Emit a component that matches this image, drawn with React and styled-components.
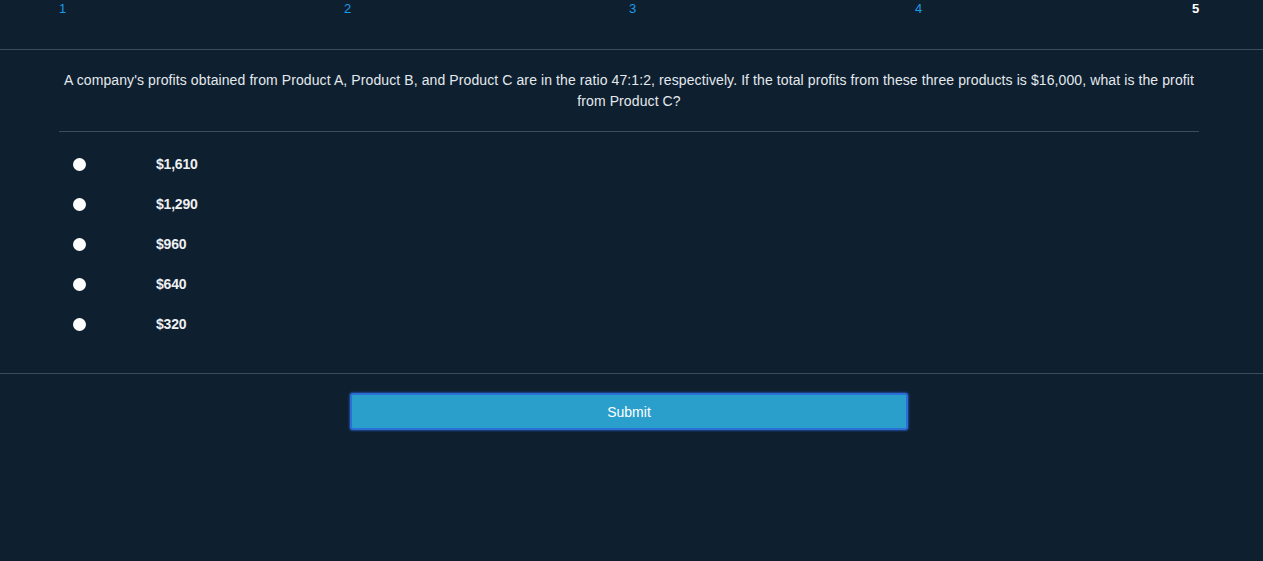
import React, { useState } from "react";
import styled, { createGlobalStyle } from "styled-components";

const Global = createGlobalStyle`
  html, body {
    margin: 0;
    padding: 0;
    background: #0e1f2f;
  }
  body {
    font-family: "Liberation Sans", Arial, Helvetica, sans-serif;
    min-height: 561px;
  }
`

const Page = styled.div`
  background: #0e1f2f;
  min-height: 561px;
  color: #e3e8ec;
`

const Steps = styled.nav`
  display: grid;
  grid-template-columns: 285px 285px 286px 277px auto;
  align-items: start;
  height: 50px;
  padding: 1px 0 0 59px;
  box-sizing: border-box;
  border-bottom: 1px solid #3d4c59;
`

const Step = styled.a`
  font-size: 13px;
  line-height: 16px;
  color: ${(props) => (props.active ? '#ffffff' : '#1a9be8')};
  font-weight: ${(props) => (props.active ? 'bold' : 'normal')};
  text-decoration: none;
  cursor: pointer;
`

const Body = styled.section`
  margin: 0 64px 0 59px;
  padding-top: 20px;
`

const Question = styled.p`
  margin: 0;
  padding: 0 0 19px;
  font-size: 14px;
  line-height: 21px;
  letter-spacing: 0.1px;
  text-align: center;
  color: #e4e9ee;
  border-bottom: 1px solid #3d4c59;
`

const Options = styled.ul`
  list-style: none;
  margin: 0;
  padding: 12px 0 29px;
`

const Option = styled.li`
  display: flex;
  align-items: center;
  height: 40px;
  cursor: pointer;
`

const Radio = styled.span`
  width: 13px;
  height: 13px;
  border-radius: 50%;
  background: #ffffff;
  margin-left: 14px;
  flex-shrink: 0;
  box-sizing: border-box;
  border: ${(props) => (props.checked ? '4px solid #1a9be8' : 'none')};
`

const Label = styled.span`
  margin-left: 70px;
  font-size: 14px;
  font-weight: bold;
  letter-spacing: -0.2px;
  color: #eef1f4;
`

const Footer = styled.div`
  border-top: 1px solid #3d4c59;
  padding-top: 19px;
  display: flex;
  padding-left: 350px;
`

const Submit = styled.button`
  width: 558px;
  height: 37px;
  background: #2b9fcc;
  border: 2px solid #2b6fd6;
  border-radius: 3px;
  box-shadow: 0 0 2px 1px rgba(40, 100, 210, 0.6);
  color: #ffffff;
  font-family: "Liberation Sans", Arial, sans-serif;
  font-size: 14px;
  cursor: pointer;
`

const answers = ['$1,610', '$1,290', '$960', '$640', '$320']

export default function App() {
  const [picked, setPicked] = useState(null)
  return (
    <Page>
      <Global />
      <Steps>
        {[1, 2, 3, 4, 5].map((n) => (
          <Step key={n} active={n === 5}>{n}</Step>
        ))}
      </Steps>
      <Body>
        <Question>
          A company's profits obtained from Product A, Product B, and Product C are in the ratio 47:1:2, respectively. If the total profits from these three products is $16,000, what is the profit from Product C?
        </Question>
        <Options>
          {answers.map((a, i) => (
            <Option key={a} onClick={() => setPicked(i)}>
              <Radio checked={picked === i} />
              <Label>{a}</Label>
            </Option>
          ))}
        </Options>
      </Body>
      <Footer>
        <Submit>Submit</Submit>
      </Footer>
    </Page>
  )
}
